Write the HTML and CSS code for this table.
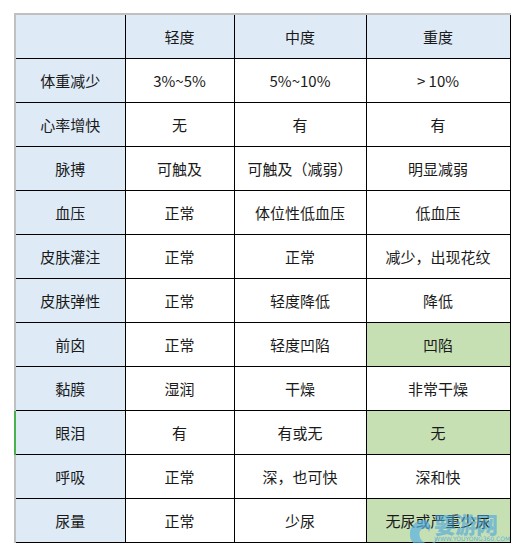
FILE: index.html
```html
<!DOCTYPE html>
<html lang="zh">
<head>
<meta charset="utf-8">
<link rel="stylesheet" href="styles.css">
</head>
<body>
<div class="wrap">
<table class="grid">
  <colgroup>
    <col class="c1"><col class="c2"><col class="c3"><col class="c4">
  </colgroup>
  <tr class="head"><td class="lab"></td><td>轻度</td><td>中度</td><td>重度</td></tr>
  <tr><td class="lab">体重减少</td><td>3%~5%</td><td>5%~10%</td><td>&gt; 10%</td></tr>
  <tr><td class="lab">心率增快</td><td>无</td><td>有</td><td>有</td></tr>
  <tr><td class="lab">脉搏</td><td>可触及</td><td>可触及（减弱）</td><td>明显减弱</td></tr>
  <tr><td class="lab">血压</td><td>正常</td><td>体位性低血压</td><td>低血压</td></tr>
  <tr><td class="lab">皮肤灌注</td><td>正常</td><td>正常</td><td>减少，出现花纹</td></tr>
  <tr><td class="lab">皮肤弹性</td><td>正常</td><td>轻度降低</td><td>降低</td></tr>
  <tr><td class="lab">前囟</td><td>正常</td><td>轻度凹陷</td><td class="hl">凹陷</td></tr>
  <tr><td class="lab">黏膜</td><td>湿润</td><td>干燥</td><td>非常干燥</td></tr>
  <tr><td class="lab sel">眼泪</td><td>有</td><td>有或无</td><td class="hl">无</td></tr>
  <tr><td class="lab">呼吸</td><td>正常</td><td>深，也可快</td><td>深和快</td></tr>
  <tr><td class="lab">尿量</td><td>正常</td><td>少尿</td><td class="hl">无尿或严重少尿</td></tr>
</table>
<div class="mark">
  <svg class="swirl" width="32" height="32" viewBox="0 0 34 34">
    <path d="M17 2 A15 15 0 1 0 32 17 A10 10 0 0 1 22 27 A10 10 0 0 1 12 17 A6 6 0 0 1 18 11 A4 4 0 0 1 22 15 A8 8 0 0 0 17 2 Z" fill="#5ab0e4" fill-opacity="0.7"/>
  </svg>
  <div class="mtext">
    <span class="mname">要游网</span>
    <span class="murl">WWW.YOUYONG360.COM</span>
  </div>
</div>
</div>
</body>
</html>
```
FILE: styles.css
```css
html, body {
  margin: 0;
  padding: 0;
  background: #ffffff;
}
.wrap {
  position: relative;
  padding: 13px 0 0 14px;
  width: 507px;
}
.grid {
  border-collapse: collapse;
  table-layout: fixed;
  width: 495px;
  font-family: "Microsoft YaHei", "Noto Sans CJK SC", sans-serif;
  font-size: 15px;
  color: #1a1a1a;
}
.c1 { width: 110px; }
.c2 { width: 109px; }
.c3 { width: 132px; }
.c4 { width: 144px; }
.grid td {
  border: 1px solid #000000;
  height: 44px;
  padding: 0;
  text-align: center;
  vertical-align: middle;
  box-sizing: border-box;
  background: #ffffff;
}
.grid tr.head td {
  background: #deebf7;
  border-top: 2px solid #c0c0c0;
}
.grid td.lab {
  background: #deebf7;
  border-left: 2px solid #c0c0c0;
}
.grid td.lab.sel {
  border-left: 2px solid #4caf50;
}
.grid td.hl {
  background: #c6e0b4;
}
.mark {
  position: absolute;
  left: 408px;
  top: 511px;
  display: flex;
  align-items: flex-start;
  pointer-events: none;
}
.swirl {
  margin-top: 7px;
}
.mtext {
  display: flex;
  flex-direction: column;
  margin-left: -6px;
}
.mname {
  font-family: "Noto Sans CJK SC", sans-serif;
  font-weight: 900;
  font-size: 22px;
  line-height: 24px;
  height: 24px;
  color: rgba(70, 165, 225, 0.6);
  letter-spacing: -1px;
}
.murl {
  font-family: "DejaVu Sans", sans-serif;
  font-size: 6px;
  line-height: 8px;
  color: rgba(70, 165, 225, 0.8);
}
```
